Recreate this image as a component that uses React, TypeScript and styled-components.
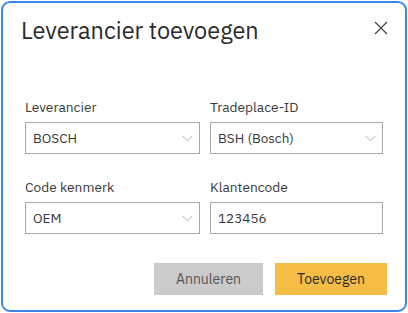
import styled, { createGlobalStyle } from 'styled-components';

const GlobalStyle = createGlobalStyle`
  html, body {
    margin: 0;
    padding: 0;
    background: #ffffff;
  }
  body {
    font-family: "IBM Plex Sans", Inter, "Noto Sans", sans-serif;
  }
`;

const Dialog = styled.div`
  box-sizing: border-box;
  width: 406px;
  height: 311px;
  margin: 1px 0 0 1px;
  border: 2px solid #3d86f0;
  border-radius: 9px;
  background: #fff;
  padding: 11px 18px 14px 18px;
  display: flex;
  flex-direction: column;
`;

const Header = styled.div`
  display: flex;
  justify-content: space-between;
  align-items: flex-start;
  height: 32px;
`;

const Title = styled.h2`
  margin: 0;
  font-size: 23.5px;
  line-height: 32px;
  font-weight: 400;
  color: #2b2b2b;
`;

const CloseButton = styled.button`
  background: transparent;
  border: none;
  padding: 0;
  width: 16px;
  height: 16px;
  margin: 6px -2px 0 0;
  cursor: pointer;
  display: flex;
  align-items: center;
  justify-content: center;
`;

const Grid = styled.div`
  display: grid;
  grid-template-columns: 175px 173px;
  column-gap: 10px;
  row-gap: 25px;
  margin-top: 53px;
  padding-left: 4px;
`;

const Field = styled.div`
  display: flex;
  flex-direction: column;
`;

const Label = styled.label`
  font-size: 13.75px;
  color: #3a3a3a;
  line-height: 16px;
  margin-bottom: 7px;
`;

const Box = styled.div`
  box-sizing: border-box;
  height: 32px;
  border: 1px solid #a8a8a8;
  display: flex;
  align-items: center;
  justify-content: space-between;
  padding: 0 5px 0 7px;
  font-size: 13.5px;
  color: #383838;
`;

const Footer = styled.div`
  display: flex;
  justify-content: flex-end;
  gap: 12px;
  margin-top: 29px;
`;

const Button = styled.button<{ $primary?: boolean }>`
  height: 32px;
  width: ${(p) => (p.$primary ? '112px' : '109px')};
  border: none;
  font-family: inherit;
  font-size: 14px;
  background: ${(p) => (p.$primary ? '#f4bd46' : '#cbcbcb')};
  color: ${(p) => (p.$primary ? '#2a2a2a' : '#555')};
  cursor: pointer;
`;

const Chevron = () => (
  <svg width="12" height="7" viewBox="0 0 12 7" fill="none">
    <path d="M0.5 0.8 L5.5 5.8 L10.5 0.8" stroke="#b2b2b2" strokeWidth="1" />
  </svg>
);

const Select = ({ value }: { value: string }) => (
  <Box>
    <span>{value}</span>
    <Chevron />
  </Box>
);

const App = () => (
  <>
    <GlobalStyle />
    <Dialog>
      <Header>
        <Title>Leverancier toevoegen</Title>
        <CloseButton aria-label="Sluiten">
          <svg width="14" height="14" viewBox="0 0 14 14">
            <path d="M1 1 L13 13 M13 1 L1 13" stroke="#444" strokeWidth="1.2" />
          </svg>
        </CloseButton>
      </Header>
      <Grid>
        <Field>
          <Label>Leverancier</Label>
          <Select value="BOSCH" />
        </Field>
        <Field>
          <Label>Tradeplace-ID</Label>
          <Select value="BSH (Bosch)" />
        </Field>
        <Field>
          <Label>Code kenmerk</Label>
          <Select value="OEM" />
        </Field>
        <Field>
          <Label>Klantencode</Label>
          <Box>123456</Box>
        </Field>
      </Grid>
      <Footer>
        <Button>Annuleren</Button>
        <Button $primary>Toevoegen</Button>
      </Footer>
    </Dialog>
  </>
);

export default App;
